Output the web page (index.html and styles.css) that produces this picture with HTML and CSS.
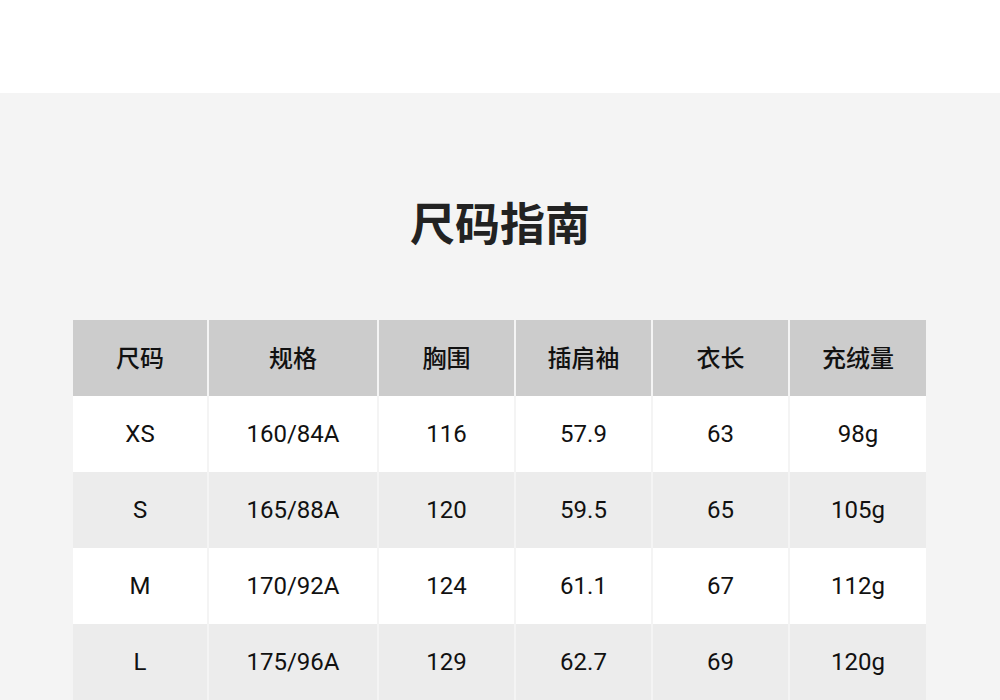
FILE: index.html
```html
<!DOCTYPE html>
<html lang="zh">
<head>
<meta charset="utf-8">
<link rel="stylesheet" href="styles.css">
</head>
<body>
<div class="top"></div>
<section class="guide">
  <h1 class="title">尺码指南</h1>
  <table class="sizes">
    <thead>
      <tr><th>尺码</th><th>规格</th><th>胸围</th><th>插肩袖</th><th>衣长</th><th>充绒量</th></tr>
    </thead>
    <tbody>
      <tr><td>XS</td><td>160/84A</td><td>116</td><td>57.9</td><td>63</td><td>98g</td></tr>
      <tr><td>S</td><td>165/88A</td><td>120</td><td>59.5</td><td>65</td><td>105g</td></tr>
      <tr><td>M</td><td>170/92A</td><td>124</td><td>61.1</td><td>67</td><td>112g</td></tr>
      <tr><td>L</td><td>175/96A</td><td>129</td><td>62.7</td><td>69</td><td>120g</td></tr>
    </tbody>
  </table>
</section>
</body>
</html>
```

FILE: styles.css
```css
html, body {
  margin: 0;
  padding: 0;
  background: #f4f4f4;
  font-family: Roboto, "Noto Sans CJK SC", sans-serif;
}
.top {
  height: 93px;
  background: #ffffff;
}
.guide {
  background: #f4f4f4;
  padding: 98px 0 40px;
}
.title {
  margin: 0;
  text-align: center;
  font-family: "Noto Sans CJK SC", sans-serif;
  font-weight: 700;
  font-size: 45px;
  line-height: 62px;
  color: #222222;
}
.sizes {
  margin: 67px 0 0 73px;
  width: 853px;
  border-collapse: collapse;
  table-layout: fixed;
}
.sizes th, .sizes td {
  height: 76px;
  padding: 0;
  text-align: center;
  vertical-align: middle;
  border-left: 2px solid #f4f4f4;
  color: #111111;
}
.sizes th:first-child, .sizes td:first-child {
  border-left: none;
  width: 134px;
}
.sizes th:nth-child(2), .sizes td:nth-child(2) { width: 168px; }
.sizes th {
  background: #cccccc;
  font-family: "Noto Sans CJK SC", sans-serif;
  font-weight: 500;
  font-size: 24px;
  color: #111111;
  padding-bottom: 4px;
  height: 72px;
}
.sizes td {
  font-size: 24px;
  background: #ffffff;
}
.sizes tbody tr:nth-child(even) td {
  background: #ececec;
}
```
